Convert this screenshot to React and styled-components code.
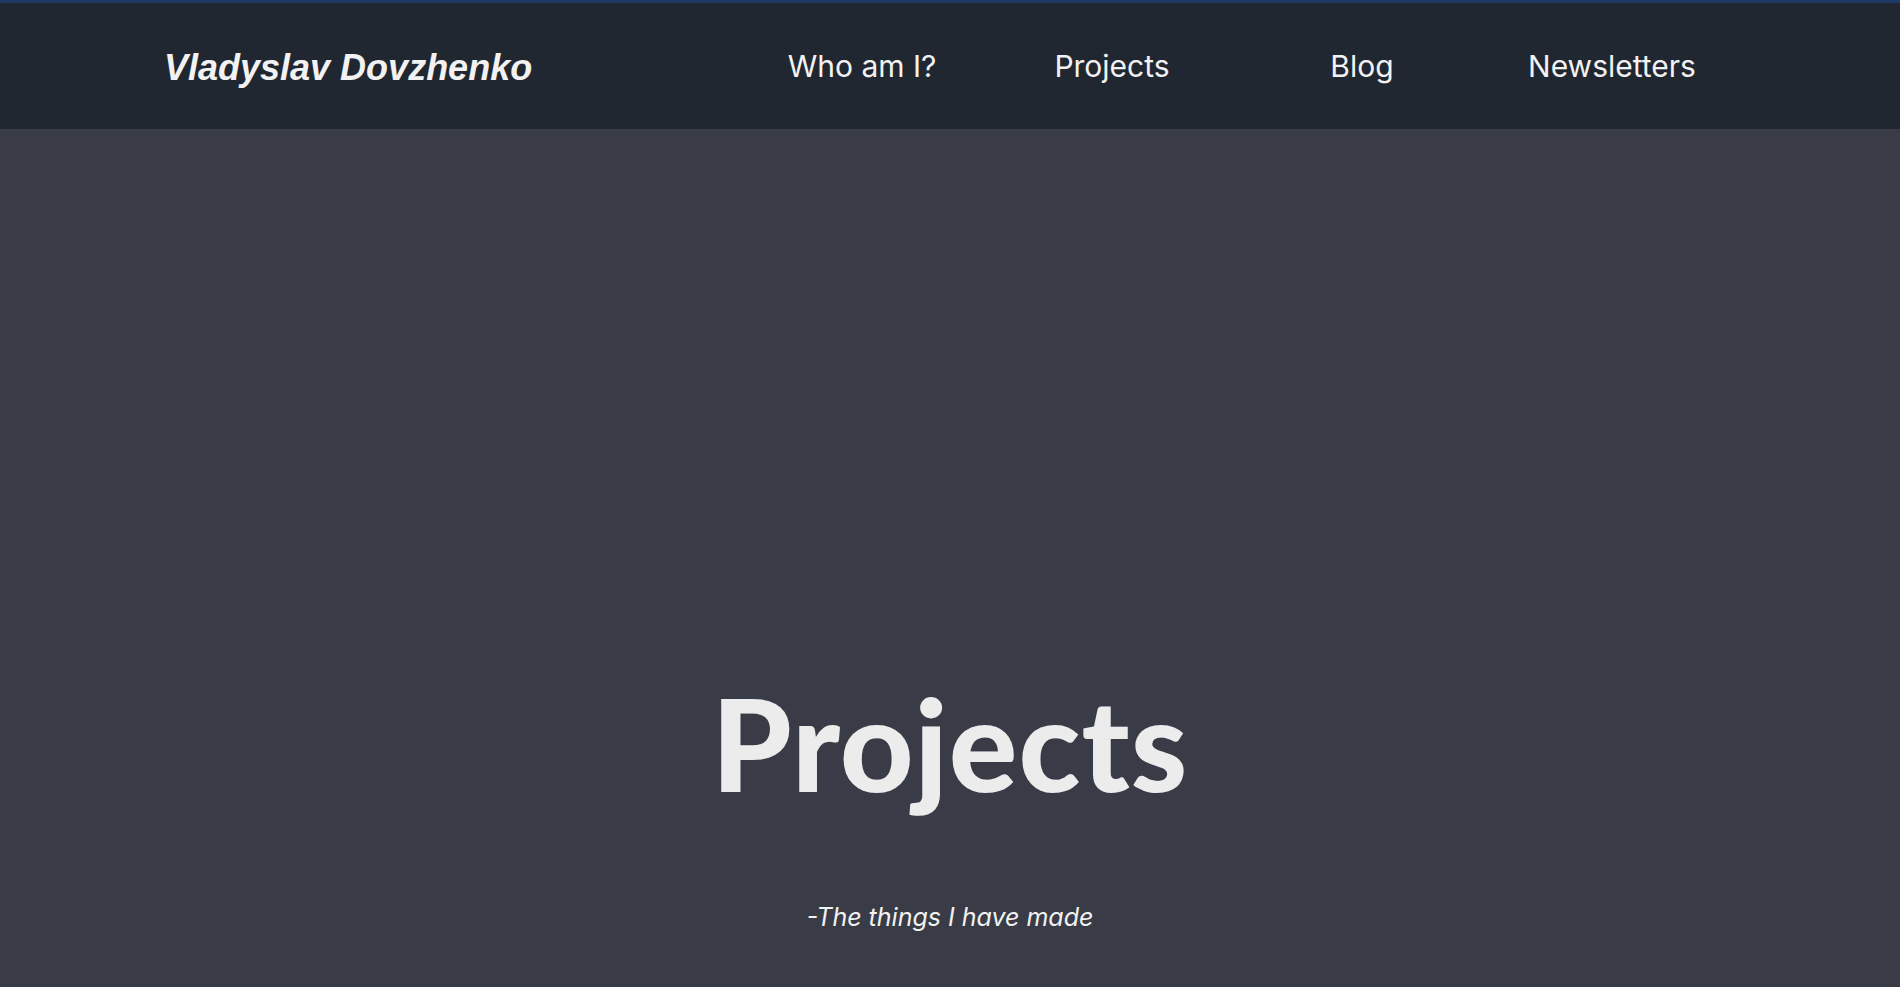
import React from 'react'
import styled, { createGlobalStyle } from 'styled-components'

const GlobalStyle = createGlobalStyle`
html, body {
    margin: 0;
    padding: 0;
    background-color: #393c46;
    font-family: Inter, "Liberation Sans", sans-serif;
}
`

const links = ["Who am I?", "Projects", "Blog", "Newsletters"]

function App() {
    return (
        <>
            <GlobalStyle />
            <Page>
                <Header>
                    <Logo>Vladyslav Dovzhenko</Logo>
                    <Nav>
                        {links.map((link) => (
                            <NavLink key={link} href="#">{link}</NavLink>
                        ))}
                    </Nav>
                </Header>
                <Hero>
                    <Title>Projects</Title>
                    <Subtitle>-The things I have made</Subtitle>
                </Hero>
            </Page>
        </>
    )
}

const Page = styled.div`
min-height: 987px;
display: flex;
flex-direction: column;
background-color: #393c46;
`

const Header = styled.header`
height: 126px;
border-top: 3px solid #1f3a66;
background-color: #212731;
display: flex;
align-items: center;
justify-content: space-between;
padding: 0 163px 0 164px;
`

const Logo = styled.div`
font-family: "Liberation Sans", Arial, sans-serif;
font-weight: 700;
font-style: italic;
font-size: 36px;
color: #f2f2f2;
margin-top: 4px;
`

const Nav = styled.nav`
display: grid;
grid-template-columns: repeat(4, 250px);
align-items: center;
`

const NavLink = styled.a`
text-align: center;
font-family: Inter, "Liberation Sans", sans-serif;
font-size: 30px;
color: #f2f2f2;
text-decoration: none;

&:hover{
    color: #ffffff;
}
`

const Hero = styled.main`
flex: 1;
display: flex;
flex-direction: column;
align-items: center;
padding-top: 537px;
`

const Title = styled.h1`
margin: 0;
font-family: Lato, "Noto Sans", sans-serif;
font-weight: 900;
font-size: 128px;
letter-spacing: 1px;
line-height: 1.2;
color: #ececec;
`

const Subtitle = styled.p`
margin: 82px 0 0;
font-family: Inter, "Liberation Sans", sans-serif;
font-style: italic;
font-size: 25px;
color: #f2f2f2;
`

export default App
